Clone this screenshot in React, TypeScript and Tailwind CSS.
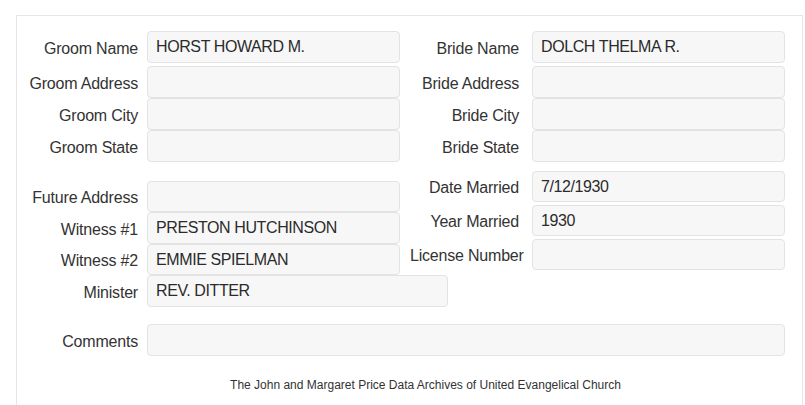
import React from "react";

const Label = ({ children, w }: { children: React.ReactNode; w: string }) => (
  <div className={`${w} shrink-0 whitespace-nowrap text-right text-[16px] tracking-[-0.2px] leading-[18px] text-[#333] pt-[3px]`}>
    {children}
  </div>
);

const Field = ({ value, cls }: { value?: string; cls: string }) => (
  <div className={`${cls} shrink-0 box-border flex items-center rounded-[4px] border border-[#e3e3e3] bg-[#f7f7f7] pl-[8px] text-[16px] tracking-[-0.4px] text-[#2b2b2b]`}>
    {value}
  </div>
);

export default function App() {
  return (
    <div className="w-[805px] h-[405px] overflow-hidden bg-white" style={{ fontFamily: '"Liberation Sans", Arial, sans-serif' }}>
      <div className="ml-[16px] mt-[15px] w-[787px] h-[420px] border border-[#e6e6e6] box-border">
        {/* top group */}
        <div className="flex pt-[15px]">
          <div className="ml-[11px] flex flex-col">
            <div className="flex items-center gap-[9px] mb-[3px]">
              <Label w="w-[110px]">Groom Name</Label>
              <Field cls="w-[253px] h-[32px]" value="HORST HOWARD M." />
            </div>
            <div className="flex items-center gap-[9px]">
              <Label w="w-[110px]">Groom Address</Label>
              <Field cls="w-[253px] h-[32px]" />
            </div>
            <div className="flex items-center gap-[9px]">
              <Label w="w-[110px]">Groom City</Label>
              <Field cls="w-[253px] h-[32px]" />
            </div>
            <div className="flex items-center gap-[9px]">
              <Label w="w-[110px]">Groom State</Label>
              <Field cls="w-[253px] h-[32px]" />
            </div>
          </div>
          <div className="ml-[10px] flex flex-col">
            <div className="flex items-center gap-[13px] mb-[3px]">
              <Label w="w-[109px]">Bride Name</Label>
              <Field cls="w-[253px] h-[32px]" value="DOLCH THELMA R." />
            </div>
            <div className="flex items-center gap-[13px]">
              <Label w="w-[109px]">Bride Address</Label>
              <Field cls="w-[253px] h-[32px]" />
            </div>
            <div className="flex items-center gap-[13px]">
              <Label w="w-[109px]">Bride City</Label>
              <Field cls="w-[253px] h-[32px]" />
            </div>
            <div className="flex items-center gap-[13px]">
              <Label w="w-[109px]">Bride State</Label>
              <Field cls="w-[253px] h-[32px]" />
            </div>
          </div>
        </div>

        {/* second group */}
        <div className="flex items-start">
          <div className="ml-[11px] mt-[19px] flex flex-col">
            <div className="flex items-center gap-[9px]">
              <Label w="w-[110px]">Future Address</Label>
              <Field cls="w-[253px] h-[31px]" />
            </div>
            <div className="flex items-center gap-[9px]">
              <Label w="w-[110px]">Witness #1</Label>
              <Field cls="w-[253px] h-[32px]" value="PRESTON HUTCHINSON" />
            </div>
            <div className="flex items-center gap-[9px]">
              <Label w="w-[110px]">Witness #2</Label>
              <Field cls="w-[253px] h-[31px]" value="EMMIE SPIELMAN" />
            </div>
            <div className="flex items-center gap-[9px]">
              <Label w="w-[110px]">Minister</Label>
              <Field cls="w-[301px] h-[32px]" value="REV. DITTER" />
            </div>
          </div>
          <div className="ml-[-38px] mt-[9px] flex flex-col gap-[3px]">
            <div className="flex items-center gap-[13px]">
              <Label w="w-[109px]">Date Married</Label>
              <Field cls="w-[253px] h-[31px]" value="7/12/1930" />
            </div>
            <div className="flex items-center gap-[13px]">
              <Label w="w-[109px]">Year Married</Label>
              <Field cls="w-[253px] h-[31px]" value="1930" />
            </div>
            <div className="flex items-center gap-[13px]">
              <Label w="w-[109px]">License Number</Label>
              <Field cls="w-[253px] h-[31px]" />
            </div>
          </div>
        </div>

        {/* comments */}
        <div className="ml-[11px] mt-[17px] flex items-center gap-[9px]">
          <Label w="w-[110px]">Comments</Label>
          <Field cls="w-[638px] h-[32px]" />
        </div>

        <div className="mt-[22px] pl-[32px] text-center text-[12px] leading-[14px] text-[#333]">
          The John and Margaret Price Data Archives of United Evangelical Church
        </div>
      </div>
    </div>
  );
}
